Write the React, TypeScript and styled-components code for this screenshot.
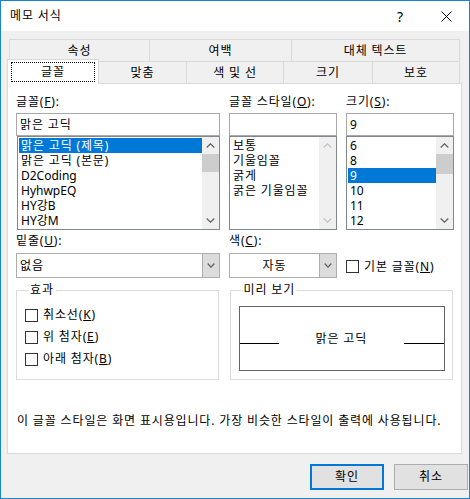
import React from 'react';
import styled, { createGlobalStyle, css } from 'styled-components';

const Global = createGlobalStyle`
  html, body { margin: 0; padding: 0; background: #ffffff; }
  body {
    font-family: "Noto Sans", "Noto Sans CJK KR", sans-serif;
    font-size: 12px;
    letter-spacing: 0.85px;
    color: #000;
  }
  * { box-sizing: border-box; }
`;

const Window = styled.div`
  width: 470px;
  height: 499px;
  border: 1px solid #1883d7;
  background: #f0f0f0;
  display: flex;
  flex-direction: column;
`;

const TitleBar = styled.div`
  height: 30px;
  background: #ffffff;
  display: flex;
  align-items: center;
  padding-left: 9px;
  flex: none;
`;

const TitleText = styled.div`
  flex: 1;
  font-size: 12px;
  line-height: 16px;
`;

const CaptionButton = styled.div`
  width: 46px;
  height: 30px;
  display: flex;
  align-items: center;
  justify-content: center;
  font-size: 14px;
  letter-spacing: 0;
`;

const Body = styled.div`
  flex: 1;
  display: flex;
  flex-direction: column;
  padding: 8px 0 0 6px;
`;

const TabStrip = styled.div`
  display: flex;
  flex-direction: column;
  margin-left: 2px;
  width: 451px;
`;

const TabRow = styled.div`
  display: flex;
  height: 22px;
  align-items: flex-end;
`;

const Tab = styled.div<{ $w: number; $first?: boolean }>`
  width: ${(p) => p.$w}px;
  height: 22px;
  border-top: 1px solid #d9d9d9;
  border-left: ${(p) => (p.$first ? '1px solid #d9d9d9' : 'none')};
  border-right: 1px solid #d9d9d9;
  background: #f0f0f0;
  display: flex;
  align-items: center;
  justify-content: center;
  line-height: 16px;
  flex: none;
`;

const ActiveTab = styled.div`
  position: relative;
  z-index: 1;
  width: 92px;
  height: 25px;
  margin-left: -2px;
  margin-bottom: -1px;
  border: 1px solid #d9d9d9;
  border-bottom: none;
  background: #ffffff;
  display: flex;
  flex-direction: column;
  flex: none;
`;

const FocusRect = styled.div`
  flex: 1;
  margin: 2px 3px 2px 3px;
  border: 1px dotted #000;
  display: flex;
  align-items: center;
  justify-content: center;
  line-height: 16px;
`;

const Panel = styled.div`
  width: 455px;
  height: 371px;
  background: #ffffff;
  border: 1px solid #d9d9d9;
  padding: 10px 8px 0 8px;
  display: flex;
  flex-direction: column;
`;

const TopGrid = styled.div`
  display: grid;
  grid-template-columns: 204px 108px 108px;
  column-gap: 9px;
`;

const Field = styled.div`
  display: flex;
  flex-direction: column;
`;

const Label = styled.div`
  line-height: 16px;
  height: 16px;
  white-space: nowrap;
`;

const TextBox = styled.div`
  margin-top: 3px;
  height: 23px;
  border: 1px solid #a9a9a9;
  background: #fff;
  padding-left: 3px;
  display: flex;
  align-items: center;
  line-height: 16px;
`;

const ListBox = styled.div<{ $inset?: boolean }>`
  height: 94px;
  margin-left: ${(p) => (p.$inset ? '1px' : '0')};
  border: 1px solid #828790;
  background: #fff;
  display: flex;
`;

const ListItems = styled.div`
  flex: 1;
  padding: 1px 0 0 1px;
  overflow: hidden;
`;

const ListItem = styled.div<{ $sel?: boolean; $latin?: boolean }>`
  height: 15px;
  line-height: 15px;
  padding-left: 2px;
  white-space: nowrap;
  overflow: hidden;
  letter-spacing: ${(p) => (p.$latin ? '0' : '0.85px')};
  ${(p) =>
    p.$sel &&
    css`
      background: #0078d7;
      color: #fff;
    `}
`;

const ScrollBar = styled.div`
  width: 17px;
  background: #f0f0f0;
  display: flex;
  flex-direction: column;
  flex: none;
`;

const ScrollArrow = styled.div`
  height: 17px;
  display: flex;
  align-items: center;
  justify-content: center;
  flex: none;
`;

const ScrollTrack = styled.div`
  flex: 1;
`;

const Thumb = styled.div<{ $h: number }>`
  height: ${(p) => p.$h}px;
  background: #cdcdcd;
`;

const MidGrid = styled.div`
  display: grid;
  grid-template-columns: 204px 108px 108px;
  column-gap: 9px;
  margin-top: 3px;
`;

const Combo = styled.div`
  margin-top: 4px;
  height: 25px;
  border: 1px solid #adadad;
  background: #fff;
  display: flex;
`;

const ComboValue = styled.div<{ $center?: boolean }>`
  flex: 1;
  display: flex;
  align-items: center;
  justify-content: ${(p) => (p.$center ? 'center' : 'flex-start')};
  padding-left: ${(p) => (p.$center ? '0' : '3px')};
  line-height: 16px;
`;

const ComboButton = styled.div`
  width: 17px;
  background: #dcdcdc;
  border-left: 1px solid #adadad;
  display: flex;
  align-items: center;
  justify-content: center;
`;

const CheckRow = styled.label<{ $h?: number }>`
  display: flex;
  align-items: center;
  height: ${(p) => p.$h ?? 22}px;
  gap: 5px;
  line-height: 16px;
  white-space: nowrap;
`;

const CheckBox = styled.span`
  width: 13px;
  height: 13px;
  border: 1px solid #333333;
  background: #fff;
  flex: none;
`;

const DefaultFontCheck = styled.div`
  margin-top: 20px;
  padding-top: 1px;
`;

const GroupsRow = styled.div`
  display: flex;
  gap: 11px;
  margin-top: 3px;
`;

const Group = styled.fieldset<{ $w: number }>`
  width: ${(p) => p.$w}px;
  margin: 0;
  border: 1px solid #dcdcdc;
  padding: 6px 7px 8px 8px;
  min-width: 0;
`;

const Legend = styled.legend`
  padding: 0 2px 0 1px;
  margin-left: 4px;
  line-height: 16px;
`;

const PreviewBox = styled.div`
  height: 65px;
  border: 1px solid #646464;
  display: flex;
  align-items: center;
  margin-top: 2px;
`;

const PreviewLine = styled.div<{ $w: number }>`
  width: ${(p) => p.$w}px;
  height: 1px;
  background: #000;
  margin-top: 10px;
  flex: none;
`;

const PreviewText = styled.div`
  flex: 1;
  text-align: center;
  line-height: 16px;
`;

const Note = styled.div`
  margin-top: 33px;
  padding-left: 1px;
  line-height: 16px;
  white-space: nowrap;
`;

const ButtonRow = styled.div`
  display: flex;
  justify-content: flex-end;
  gap: 10px;
  padding-right: 1px;
  margin-top: 10px;
`;

const Button = styled.div<{ $default?: boolean }>`
  width: 74px;
  height: 26px;
  background: #e1e1e1;
  border: ${(p) => (p.$default ? '2px solid #0078d7' : '1px solid #adadad')};
  display: flex;
  align-items: center;
  justify-content: center;
  line-height: 16px;
`;

const Chevron: React.FC<{ up?: boolean; color?: string; w?: number; h?: number }> = ({
  up,
  color = '#606060',
  w = 9,
  h = 5,
}) => (
  <svg width={w} height={h} viewBox={`0 0 ${w} ${h}`}>
    <polyline
      points={up ? `0.7,${h - 0.5} ${w / 2},0.8 ${w - 0.7},${h - 0.5}` : `0.7,0.5 ${w / 2},${h - 0.8} ${w - 0.7},0.5`}
      fill="none"
      stroke={color}
      strokeWidth={1.2}
    />
  </svg>
);

const Scroll: React.FC<{ thumb?: number; disabled?: boolean }> = ({ thumb, disabled }) => {
  const c = disabled ? '#c2c2c2' : '#606060';
  return (
    <ScrollBar>
      <ScrollArrow>
        <Chevron up color={c} />
      </ScrollArrow>
      <ScrollTrack>{thumb ? <Thumb $h={thumb} /> : null}</ScrollTrack>
      <ScrollArrow>
        <Chevron color={c} />
      </ScrollArrow>
    </ScrollBar>
  );
};

const fonts = ['맑은 고딕 (제목)', '맑은 고딕 (본문)', 'D2Coding', 'HyhwpEQ', 'HY강B', 'HY강M'];
const styles = ['보통', '기울임꼴', '굵게', '굵은 기울임꼴'];
const sizes = ['6', '8', '9', '10', '11', '12'];

export default function App() {
  return (
    <>
      <Global />
      <Window>
        <TitleBar>
          <TitleText>메모 서식</TitleText>
          <CaptionButton>?</CaptionButton>
          <CaptionButton>
            <svg width="11" height="11" viewBox="0 0 11 11">
              <path d="M0.5 0.5 L10.5 10.5 M10.5 0.5 L0.5 10.5" stroke="#000" strokeWidth="1" fill="none" />
            </svg>
          </CaptionButton>
        </TitleBar>
        <Body>
          <TabStrip>
            <TabRow>
              <Tab $w={141} $first>속성</Tab>
              <Tab $w={142}>여백</Tab>
              <Tab $w={168}>대체 텍스트</Tab>
            </TabRow>
            <TabRow>
              <ActiveTab>
                <FocusRect>글꼴</FocusRect>
              </ActiveTab>
              <Tab $w={88}>맞춤</Tab>
              <Tab $w={97}>색 및 선</Tab>
              <Tab $w={89}>크기</Tab>
              <Tab $w={87}>보호</Tab>
            </TabRow>
          </TabStrip>
          <Panel>
            <TopGrid>
              <Field>
                <Label>
                  글꼴(<u>F</u>):
                </Label>
                <TextBox>맑은 고딕</TextBox>
                <ListBox $inset>
                  <ListItems>
                    {fonts.map((f, i) => (
                      <ListItem key={f} $sel={i === 0} $latin={i >= 2}>
                        {f}
                      </ListItem>
                    ))}
                  </ListItems>
                  <Scroll thumb={18} />
                </ListBox>
              </Field>
              <Field>
                <Label>
                  글꼴 스타일(<u>O</u>):
                </Label>
                <TextBox />
                <ListBox>
                  <ListItems>
                    {styles.map((s) => (
                      <ListItem key={s}>{s}</ListItem>
                    ))}
                  </ListItems>
                  <Scroll disabled />
                </ListBox>
              </Field>
              <Field>
                <Label>
                  크기(<u>S</u>):
                </Label>
                <TextBox>9</TextBox>
                <ListBox>
                  <ListItems>
                    {sizes.map((s) => (
                      <ListItem key={s} $sel={s === '9'} $latin>
                        {s}
                      </ListItem>
                    ))}
                  </ListItems>
                  <Scroll thumb={20} />
                </ListBox>
              </Field>
            </TopGrid>
            <MidGrid>
              <Field>
                <Label>
                  밑줄(<u>U</u>):
                </Label>
                <Combo>
                  <ComboValue>없음</ComboValue>
                  <ComboButton>
                    <Chevron w={8} h={5} />
                  </ComboButton>
                </Combo>
              </Field>
              <Field>
                <Label>
                  색(<u>C</u>):
                </Label>
                <Combo>
                  <ComboValue $center>자동</ComboValue>
                  <ComboButton>
                    <Chevron w={8} h={5} />
                  </ComboButton>
                </Combo>
              </Field>
              <DefaultFontCheck>
                <CheckRow $h={25}>
                  <CheckBox />
                  <span>
                    기본 글꼴(<u>N</u>)
                  </span>
                </CheckRow>
              </DefaultFontCheck>
            </MidGrid>
            <GroupsRow>
              <Group $w={203}>
                <Legend>효과</Legend>
                <CheckRow>
                  <CheckBox />
                  <span>
                    취소선(<u>K</u>)
                  </span>
                </CheckRow>
                <CheckRow>
                  <CheckBox />
                  <span>
                    위 첨자(<u>E</u>)
                  </span>
                </CheckRow>
                <CheckRow>
                  <CheckBox />
                  <span>
                    아래 첨자(<u>B</u>)
                  </span>
                </CheckRow>
              </Group>
              <Group $w={224}>
                <Legend>미리 보기</Legend>
                <PreviewBox>
                  <PreviewLine $w={39} />
                  <PreviewText>맑은 고딕</PreviewText>
                  <PreviewLine $w={40} />
                </PreviewBox>
              </Group>
            </GroupsRow>
            <Note>이 글꼴 스타일은 화면 표시용입니다. 가장 비슷한 스타일이 출력에 사용됩니다.</Note>
          </Panel>
          <ButtonRow>
            <Button $default>확인</Button>
            <Button>취소</Button>
          </ButtonRow>
        </Body>
      </Window>
    </>
  );
}
